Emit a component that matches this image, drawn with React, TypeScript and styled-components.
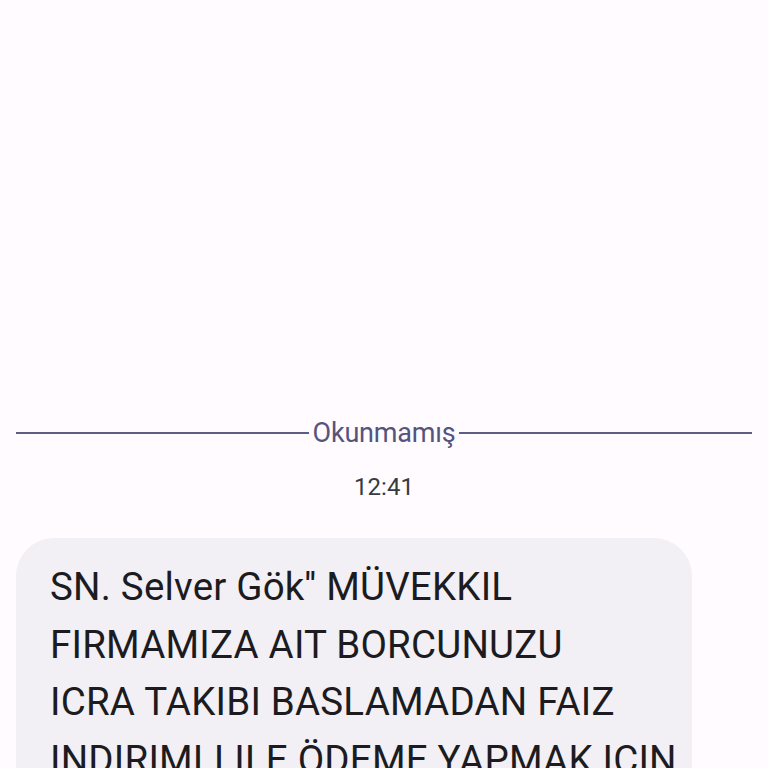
import React from 'react';
import styled, { createGlobalStyle } from 'styled-components';

const GlobalStyle = createGlobalStyle`
  html, body {
    margin: 0;
    padding: 0;
    background: #fffbfe;
  }
  body {
    font-family: Roboto, "Noto Sans", "Liberation Sans", sans-serif;
  }
`;

const Screen = styled.div`
  height: 768px;
  overflow: hidden;
  background: #fffbfe;
  display: flex;
  flex-direction: column;
  padding-top: 416px;
  box-sizing: border-box;
`;

const Divider = styled.div`
  display: flex;
  align-items: center;
  gap: 4px;
  padding: 0 16px;
`;

const Rule = styled.div`
  flex: 1;
  height: 2px;
  background: #5d5d86;
`;

const DividerLabel = styled.span`
  font-size: 27px;
  line-height: 34px;
  color: #54547e;
  letter-spacing: -0.2px;
`;

const Timestamp = styled.div`
  margin-top: 21px;
  text-align: center;
  font-size: 24px;
  line-height: 32px;
  color: #3a3a3f;
`;

const Bubble = styled.div`
  margin: 35px 0 0 16px;
  width: 676px;
  box-sizing: border-box;
  padding: 20px 30px 24px 34px;
  background: #f2f0f4;
  border-radius: 38px;
`;

const MessageText = styled.p`
  margin: 0;
  white-space: pre;
  font-size: 38.5px;
  line-height: 57.5px;
  color: #1c1b1f;
  letter-spacing: 0.2px;
`;

const message = `SN. Selver Gök'' MÜVEKKIL
FIRMAMIZA AIT BORCUNUZU
ICRA TAKIBI BASLAMADAN FAIZ
INDIRIMLI ILE ÖDEME YAPMAK ICIN`;

export default function App() {
  return (
    <>
      <GlobalStyle />
      <Screen>
        <Divider>
          <Rule />
          <DividerLabel>Okunmamış</DividerLabel>
          <Rule />
        </Divider>
        <Timestamp>12:41</Timestamp>
        <Bubble>
          <MessageText>{message}</MessageText>
        </Bubble>
      </Screen>
    </>
  );
}
